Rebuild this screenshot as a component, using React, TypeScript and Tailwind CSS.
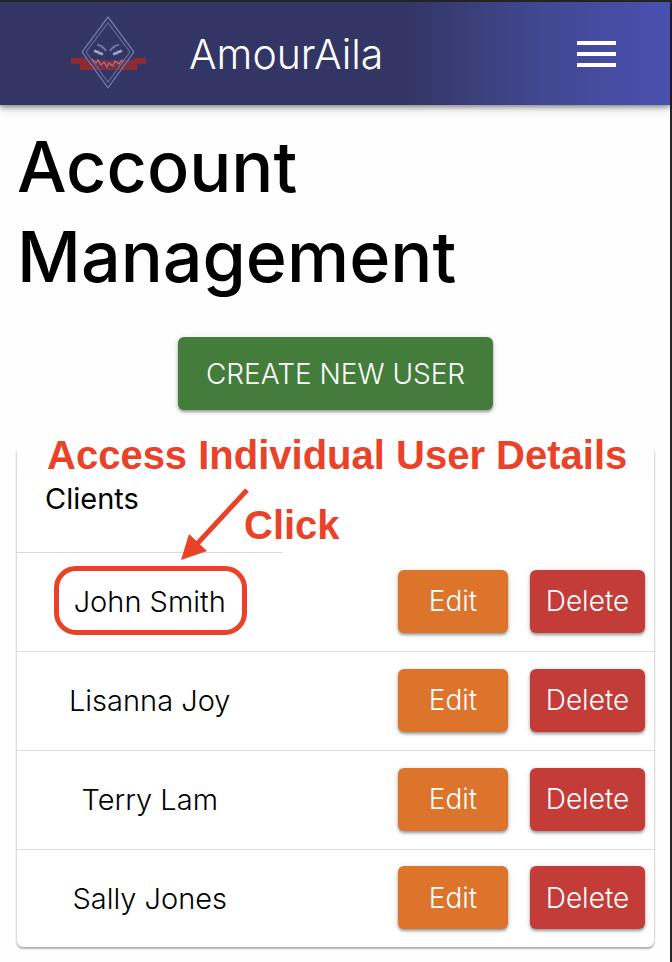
const clients = ["John Smith", "Lisanna Joy", "Terry Lam", "Sally Jones"];

const raised =
  "rounded-md shadow-[0_2px_3px_rgba(0,0,0,0.35),0_1px_6px_rgba(0,0,0,0.12)] text-white font-light text-[28px] leading-9";

function Logo() {
  return (
    <svg width="80" height="76" viewBox="0 0 80 76" fill="none" aria-hidden="true">
      <path d="M2 42H17V44H65V42H77V48H68V54H11V48H2Z" fill="#8f2b2e" />
      <path d="M16 44H64L60 53H20Z" fill="#7c2f42" />
      <path d="M39 1L65 36L39 72L13 36Z" stroke="#6b78a8" strokeWidth="1.3" />
      <path d="M39 7L61 36L39 66L17 36Z" stroke="#5f6c9c" strokeWidth="1.2" />
      <path d="M28 29C32 29 35 32 37 35M50 29C46 29 43 32 41 35" stroke="#6b78a6" strokeWidth="1.8" />
      <path d="M26 35L33 38M52 35L45 38" stroke="#9aa5c6" strokeWidth="2.6" strokeLinecap="round" />
      <path d="M23 43L27 47L29 44L32 49L35 46L38 51L40 47L44 50L46 45L50 48L53 44L55 45" stroke="#a9747f" strokeWidth="1.3" />
    </svg>
  );
}

export default function App() {
  return (
    <div className="min-h-screen border-t-2 border-r-2 border-[#242826] bg-[#fefefe] font-['Inter','Liberation_Sans',sans-serif] text-black">
      <header className="flex h-[103px] items-center bg-linear-to-r from-[#333564] from-60% via-[#41478f] via-80% to-[#4a50b0] pr-[54px] pl-[69px] text-white shadow-[0_2px_5px_rgba(0,0,0,0.4),0_4px_10px_rgba(0,0,0,0.15)]">
        <Logo />
        <span className="ml-10 flex-1 text-[41px] leading-[52px] font-light">AmourAila</span>
        <button type="button" aria-label="Open menu">
          <svg width="39" height="28" viewBox="0 0 39 28" fill="white" aria-hidden="true">
            <path d="M0 1H39V5H0ZM0 12H39V16H0ZM0 23H39V27H0Z" />
          </svg>
        </button>
      </header>

      <main className="pt-[17px] pr-4 pb-4 pl-[17px]">
        <h1 className="text-[70px] leading-[90px] font-medium">
          Account
          <br />
          Management
        </h1>
        <div className="mt-[35px] flex justify-center">
          <button type="button" className={`${raised} h-[73px] bg-[#437c3b] px-7`}>
            CREATE NEW USER
          </button>
        </div>

        <section className="relative mt-9 rounded-md bg-white shadow-[0_2px_2px_rgba(0,0,0,0.28),0_0_3px_rgba(0,0,0,0.18)]">
          <table className="w-full border-separate border-spacing-0 text-[29px] leading-9">
            <thead>
              <tr>
                <th scope="col" className="h-[107px] w-5/12 border-b border-[#d8d8d8] pl-7 text-left font-normal">
                  Clients
                </th>
                <td />
              </tr>
            </thead>
            <tbody className="[&>tr:last-child>td]:h-[97px] [&>tr:last-child>td]:border-b-0">
              {clients.map((name) => (
                <tr key={name}>
                  <td className="h-[99px] border-b border-[#dedede] text-center font-light">
                    <a href="#details">{name}</a>
                  </td>
                  <td className="border-b border-[#dedede] pr-[9px] pb-0.5">
                    <div className="flex justify-end gap-[22px]">
                      <button type="button" className={`${raised} h-[63px] w-[110px] bg-[#dd742b]`}>
                        Edit
                      </button>
                      <button type="button" className={`${raised} h-[63px] w-[115px] bg-[#c43c38]`}>
                        Delete
                      </button>
                    </div>
                  </td>
                </tr>
              ))}
            </tbody>
          </table>

          <div className="pointer-events-none absolute -top-3 left-0 w-full bg-[#fefefe] pl-[30px] font-['Liberation_Sans',Arial,sans-serif] text-[40px] leading-[42px] font-bold whitespace-nowrap text-[#e94228]">
            Access Individual User Details
          </div>
          <div className="pointer-events-none absolute top-[58px] left-[227px] font-['Liberation_Sans',Arial,sans-serif] text-[40px] leading-[42px] font-bold text-[#e94228]">
            Click
          </div>
          <svg className="pointer-events-none absolute top-10 left-40" width="76" height="76" viewBox="0 0 76 76" aria-hidden="true">
            <path d="M70 4L20 58" stroke="#e94228" strokeWidth="5" />
            <path d="M4 74L12 48L30 65Z" fill="#e94228" />
          </svg>
          <div className="pointer-events-none absolute top-[120px] left-[37px] h-[69px] w-[193px] rounded-[22px] border-5 border-[#e94228]" />
        </section>
      </main>
    </div>
  );
}
